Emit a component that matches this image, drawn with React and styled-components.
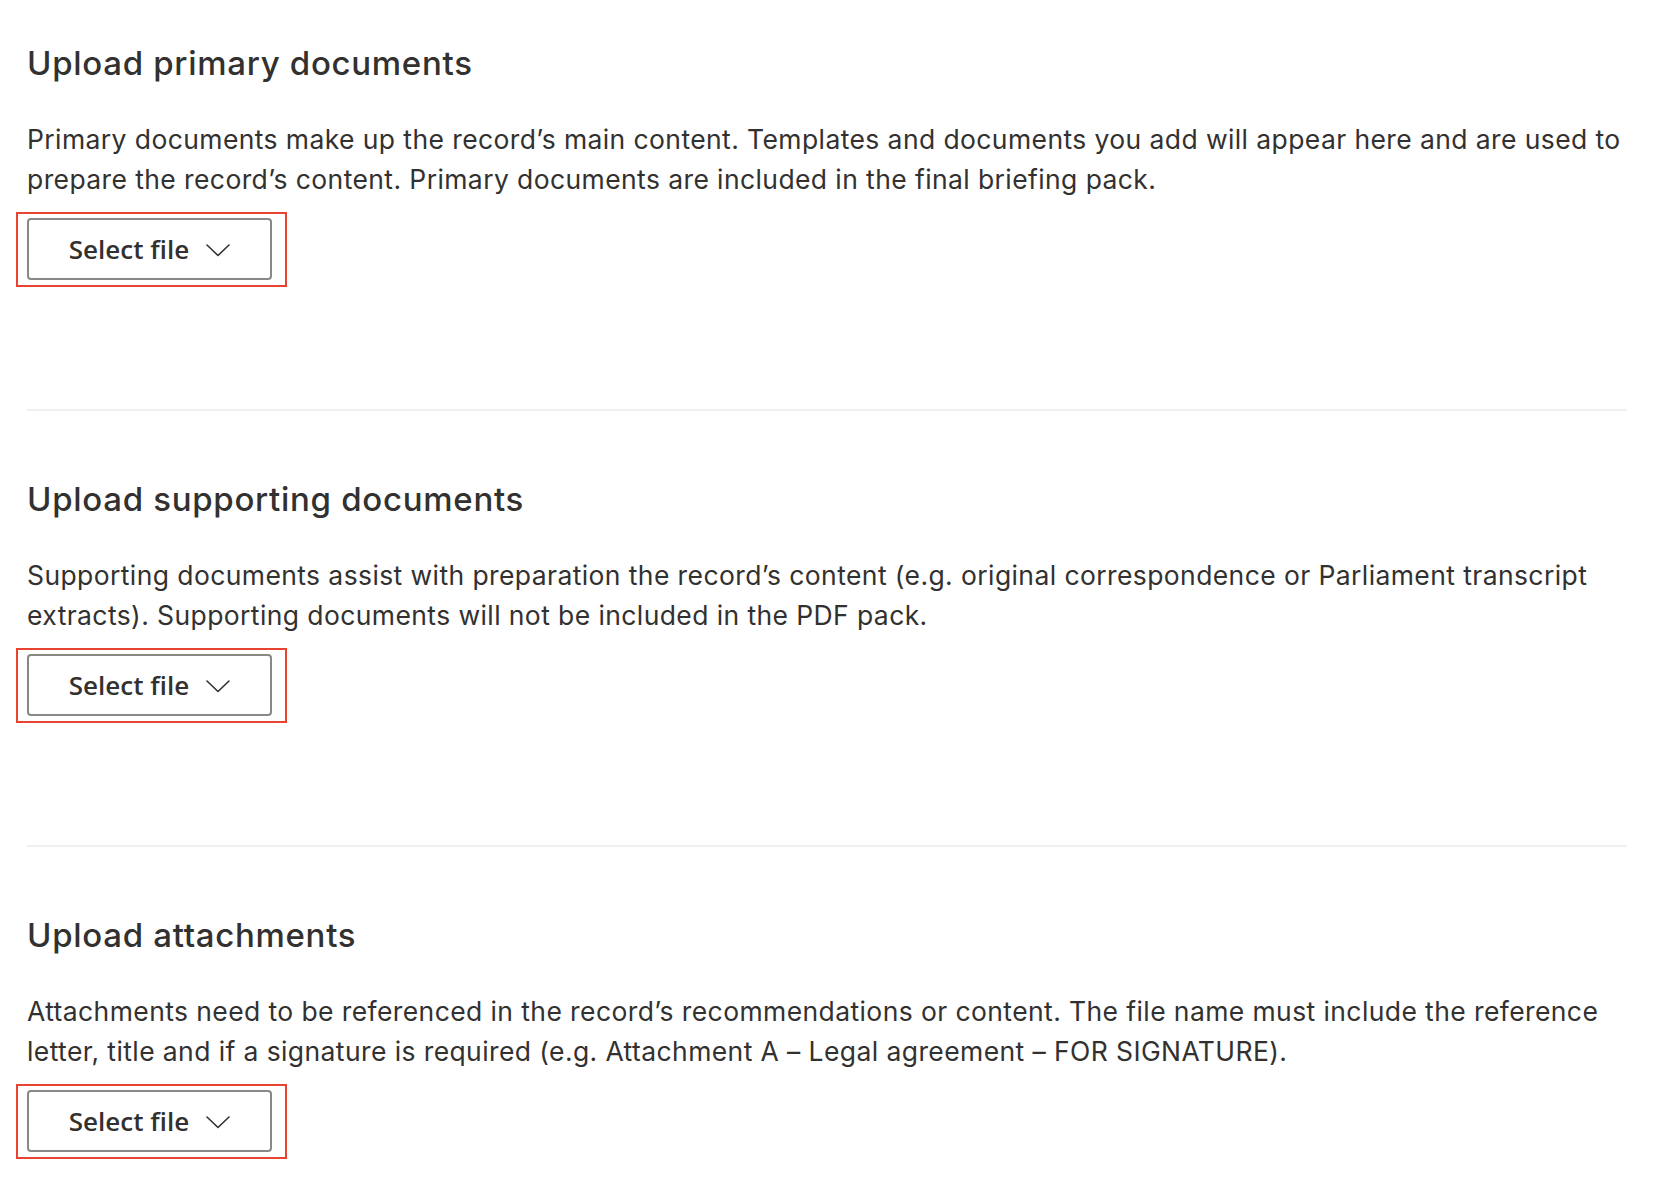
import React from 'react';
import styled, { createGlobalStyle } from 'styled-components';

const GlobalStyle = createGlobalStyle`
  body {
    margin: 0;
    background: #ffffff;
    color: #323130;
    font-family: Inter, 'Noto Sans', sans-serif;
  }
`;

const sections = [
  {
    title: 'Upload primary documents',
    text: 'Primary documents make up the record’s main content. Templates and documents you add will appear here and are used to prepare the record’s content. Primary documents are included in the final briefing pack.',
  },
  {
    title: 'Upload supporting documents',
    text: 'Supporting documents assist with preparation the record’s content (e.g. original correspondence or Parliament transcript extracts). Supporting documents will not be included in the PDF pack.',
  },
  {
    title: 'Upload attachments',
    text: 'Attachments need to be referenced in the record’s recommendations or content. The file name must include the reference letter, title and if a signature is required (e.g. Attachment A – Legal agreement – FOR SIGNATURE).',
  },
];

function ChevronDown() {
  return (
    <svg width='24' height='13' viewBox='0 0 24 13' fill='none'>
      <polyline
        points='1,1 12,11.5 23,1'
        stroke='#323130'
        strokeWidth='1.6'
        strokeLinejoin='round'
        strokeLinecap='round'
      />
    </svg>
  );
}

function UploadSection({ title, text }) {
  return (
    <Section>
      <Heading>{title}</Heading>
      <Description>{text}</Description>
      <Highlight>
        <SelectButton type='button'>
          Select file
          <ChevronDown />
        </SelectButton>
      </Highlight>
    </Section>
  );
}

export default function App() {
  return (
    <>
      <GlobalStyle />
      <Page>
        {sections.map((s, i) => (
          <React.Fragment key={s.title}>
            {i > 0 && <Divider />}
            <UploadSection title={s.title} text={s.text} />
          </React.Fragment>
        ))}
      </Page>
    </>
  );
}

const Page = styled.main`
  width: 1600px;
  padding: 43px 0 40px 27px;
`;

const Section = styled.section`
  display: flex;
  flex-direction: column;
  align-items: flex-start;
`;

const Heading = styled.h2`
  margin: 0;
  font-size: 33px;
  line-height: 40px;
  font-weight: 500;
  letter-spacing: 0.7px;
  color: #323130;
`;

const Description = styled.p`
  margin: 36px 0 0;
  font-size: 26.5px;
  line-height: 40px;
  font-weight: 400;
  letter-spacing: 0.4px;
  color: #323130;
`;

const Highlight = styled.div`
  margin: 13px 0 0 -11px;
  padding: 4px 13px 5px 9px;
  border: 2px solid #e8432f;
`;

const SelectButton = styled.button`
  display: flex;
  align-items: center;
  justify-content: center;
  gap: 17px;
  width: 245px;
  height: 62px;
  padding: 0;
  background: #ffffff;
  border: 2px solid #8a8886;
  border-radius: 4px;
  font-family: 'Open Sans', 'Noto Sans', sans-serif;
  font-size: 26px;
  font-weight: 600;
  color: #323130;
  cursor: pointer;
  svg {
    margin-top: 2px;
  }
`;

const Divider = styled.hr`
  width: 1600px;
  margin: 122px 0 68px;
  border: none;
  height: 2px;
  background: #efefef;
`;
